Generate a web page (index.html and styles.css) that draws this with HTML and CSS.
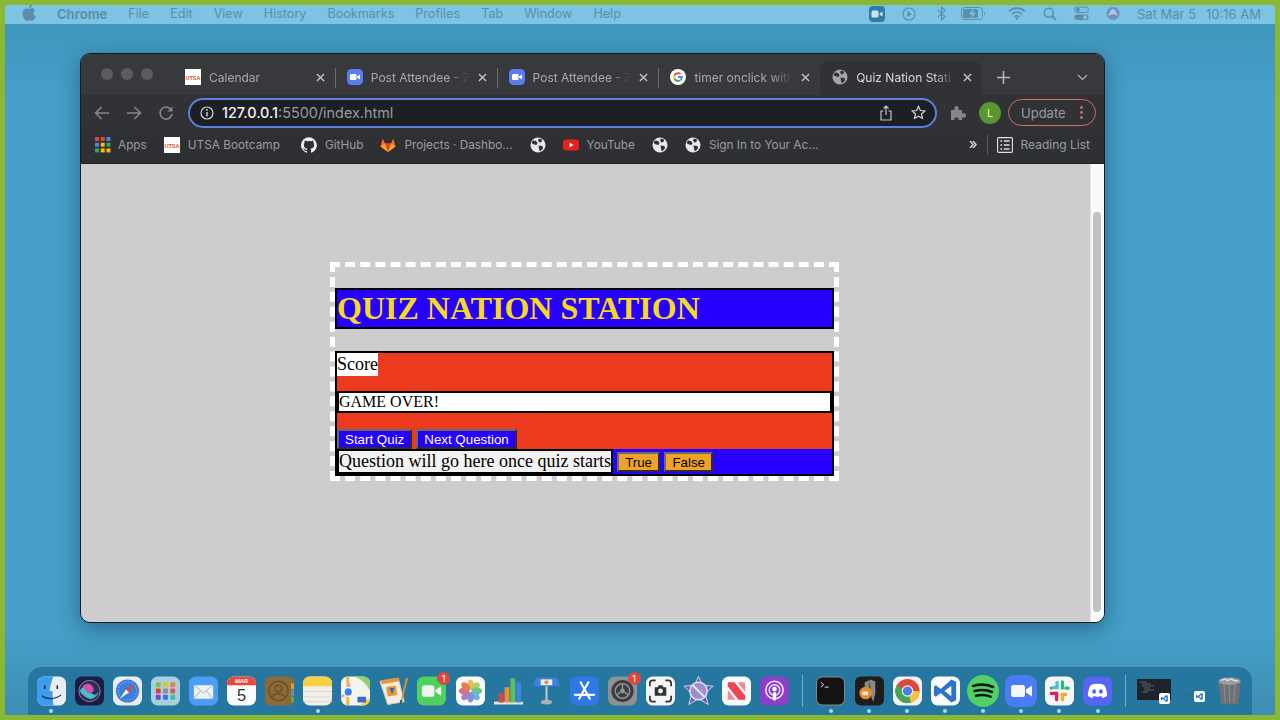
FILE: index.html
```html
<!DOCTYPE html>
<html lang="en">
<head>
    <meta charset="UTF-8">
    <title>Quiz Nation Station</title>
    <link rel="stylesheet" href="styles.css">
</head>
<body>
    <svg class="sprites" width="0" height="0">
        <symbol id="globe" viewBox="0 0 16 16">
            <circle cx="8" cy="8" r="7.500" fill="#e8e8e8"/>
            <path d="M3 3.500l3 .5 1.500 2-1 2-2.500-.5L1.500 6zM9 1.500l3 1-.5 2.500-2 .5-1.500-2zM8.500 8.500l4 .5 .5 2.500-3 3-1-2.500z" fill="#2f3033"/>
        </symbol>
        <symbol id="zoomtab" viewBox="0 0 16 16">
            <rect width="16" height="16" rx="4.500" fill="#5c7cf2"/>
            <rect x="3" y="5" width="6.500" height="6" rx="1.200" fill="#fff"/>
            <path d="M10 7.500l3-2v5l-3-2z" fill="#fff"/>
        </symbol>
        <symbol id="close" viewBox="0 0 10 10">
            <path d="M1 1l8 8M9 1l-8 8" stroke="#c4c5c7" stroke-width="1.500" fill="none"/>
        </symbol>
        <symbol id="vs" viewBox="0 0 30 30">
            <path d="M21 3l5 2.500v19L21 27 10 17l-5 4-2-1.500V10.500L5 9l5 4zM21 9.500L14 15l7 5.500z" fill="#2b74c9"/>
        </symbol>
    </svg>

    <div class="screen">
        <header class="menubar">
            <svg class="apple" width="14" height="16" viewBox="0 0 14 16"><path d="M10 0c.1 1.500-1.300 3.200-3 3.100C6.900 1.600 8.300.2 10 0zM7 4c.8 0 1.700-.7 3-.7 1.200 0 2.500.6 3.200 1.700-2.600 1.600-2.200 5.200.6 6.300-.7 1.900-2.200 4.500-3.800 4.500-.9 0-1.300-.6-2.500-.6s-1.700.6-2.600.6C3 15.800.5 11.800.5 8.500.5 5.300 2.600 3.400 4.400 3.400 5.500 3.400 6.300 4 7 4z" fill="#5d8ea8"/></svg>
            <nav class="menus">
                <span class="app-name">Chrome</span>
                <span>File</span><span>Edit</span><span>View</span><span>History</span><span>Bookmarks</span><span>Profiles</span><span>Tab</span><span>Window</span><span>Help</span>
            </nav>
            <div class="status">
                <svg width="16" height="16" viewBox="0 0 16 16"><rect width="16" height="16" rx="4" fill="#2f7da6"/><rect x="2.500" y="4.500" width="7" height="7" rx="1.500" fill="#cfe6f2"/><path d="M10.500 7.500l3-2v5l-3-2z" fill="#cfe6f2"/></svg>
                <svg class="st-play" width="14" height="14" viewBox="0 0 14 14"><circle cx="7" cy="7" r="6" fill="none" stroke="#5d8ea8" stroke-width="1.100"/><path d="M5.500 4l4 3-4 3z" fill="#5d8ea8"/></svg>
                <svg width="10" height="15" viewBox="0 0 10 15"><path d="M1 4l7 6.500-3.500 3.500V1L8 4.500 1 11" fill="none" stroke="#5d8ea8" stroke-width="1.100"/></svg>
                <svg class="st-battery" width="25" height="13" viewBox="0 0 25 13"><rect x=".500" y=".500" width="21" height="12" rx="3" fill="none" stroke="#5d8ea8"/><rect x="2" y="2" width="15" height="9" rx="1.500" fill="#5d8ea8"/><path d="M23 4.500c1.200.4 1.200 3.600 0 4z" fill="#5d8ea8"/><path d="M13 1l-5 6.500h3.500L10 12l5-6.500h-3.500z" fill="#7cc3e4"/></svg>
                <svg width="18" height="13" viewBox="0 0 18 13"><path d="M1 4.500c4.500-4.500 11.500-4.500 16 0M3.800 7.300c3-3 7.400-3 10.400 0M6.500 10c1.400-1.400 3.600-1.400 5 0" fill="none" stroke="#5d8ea8" stroke-width="1.600"/><circle cx="9" cy="11.500" r="1.300" fill="#5d8ea8"/></svg>
                <svg width="14" height="14" viewBox="0 0 14 14"><circle cx="5.800" cy="5.800" r="4.500" fill="none" stroke="#5d8ea8" stroke-width="1.600"/><path d="M9 9l4 4" stroke="#5d8ea8" stroke-width="2"/></svg>
                <svg width="15" height="15" viewBox="0 0 15 15"><rect x=".500" y="1" width="14" height="5.500" rx="2.700" fill="none" stroke="#5d8ea8"/><circle cx="4" cy="3.700" r="2" fill="#5d8ea8"/><rect x=".500" y="8.500" width="14" height="5.500" rx="2.700" fill="#5d8ea8"/><circle cx="11" cy="11.200" r="2" fill="#7cc3e4"/></svg>
                <svg width="14" height="15" viewBox="0 0 14 15"><circle cx="7" cy="7.500" r="6.500" fill="#6f8fc0"/><path d="M2 10c2-5 3-7 5-7s3 2 5 7c-3-2-7-2-10 0z" fill="#a9c6dc"/></svg>
                <span class="clock">Sat Mar 5</span>
                <span class="clock">10:16 AM</span>
            </div>
        </header>

        <main class="desktop">
            <section class="browser">
                <div class="tabstrip">
                    <div class="lights"><i></i><i></i><i></i></div>
                    <div class="tab">
                        <svg class="fav" viewBox="0 0 16 16"><rect width="16" height="16" fill="#fff"/><text x="8" y="10.500" text-anchor="middle" class="utsa-text">UTSA</text></svg>
                        <span class="tab-title">Calendar</span>
                        <svg class="tab-x"><use href="#close"/></svg>
                    </div>
                    <div class="tab">
                        <svg class="fav"><use href="#zoomtab"/></svg>
                        <span class="tab-title">Post Attendee - Z</span>
                        <svg class="tab-x"><use href="#close"/></svg>
                    </div>
                    <div class="tab">
                        <svg class="fav"><use href="#zoomtab"/></svg>
                        <span class="tab-title">Post Attendee - Z</span>
                        <svg class="tab-x"><use href="#close"/></svg>
                    </div>
                    <div class="tab">
                        <svg class="fav" viewBox="0 0 16 16"><circle cx="8" cy="8" r="8" fill="#fff"/><path d="M8 3.200a4.800 4.800 0 0 1 3.300 1.300L10 5.800A3 3 0 0 0 5.200 7L3.700 5.800A4.800 4.800 0 0 1 8 3.200z" fill="#ea4335"/><path d="M3.700 5.800L5.200 7a3 3 0 0 0 0 2L3.700 10.200a4.800 4.800 0 0 1 0-4.400z" fill="#fbbc05"/><path d="M3.700 10.200L5.200 9A3 3 0 0 0 9.800 10.400l1.400 1.200A4.800 4.800 0 0 1 3.700 10.200z" fill="#34a853"/><path d="M8 7.100h4.700c.3 1.800-.3 3.400-1.500 4.500l-1.400-1.200c.5-.4.900-.9 1-1.500H8z" fill="#4285f4"/></svg>
                        <span class="tab-title">timer onclick with</span>
                        <svg class="tab-x"><use href="#close"/></svg>
                    </div>
                    <div class="tab tab-active">
                        <svg class="fav" viewBox="0 0 16 16"><circle cx="8" cy="8" r="7.500" fill="#a5a6a8"/><path d="M3 3.500l3 .5 1.500 2-1 2-2.500-.5L1.500 6zM9 1.500l3 1-.5 2.500-2 .5-1.500-2zM8.500 8.500l4 .5 .5 2.500-3 3-1-2.500z" fill="#313236"/></svg>
                        <span class="tab-title">Quiz Nation Stati</span>
                        <svg class="tab-x"><use href="#close"/></svg>
                    </div>
                    <svg class="newtab" width="13" height="13" viewBox="0 0 13 13"><path d="M6.500 0v13M0 6.500h13" stroke="#b5b6b8" stroke-width="1.600"/></svg>
                    <svg class="tablist" width="11" height="7" viewBox="0 0 11 7"><path d="M1 1l4.500 4.500L10 1" stroke="#a0a1a4" stroke-width="1.500" fill="none"/></svg>
                </div>

                <div class="toolbar">
                    <svg width="16" height="14" viewBox="0 0 16 14"><path d="M15 7H2M7.500 1L1.500 7l6 6" stroke="#85868a" stroke-width="1.600" fill="none"/></svg>
                    <svg width="16" height="14" viewBox="0 0 16 14"><path d="M1 7h13M8.500 1l6 6-6 6" stroke="#85868a" stroke-width="1.600" fill="none"/></svg>
                    <svg width="16" height="16" viewBox="0 0 16 16"><path d="M13.500 5.500A6 6 0 1 0 14 9" stroke="#85868a" stroke-width="1.600" fill="none"/><path d="M14.500 1.500v5h-5z" fill="#85868a"/></svg>
                    <div class="omnibox">
                        <svg width="14" height="14" viewBox="0 0 14 14"><circle cx="7" cy="7" r="6" fill="none" stroke="#d5d6d8" stroke-width="1.200"/><path d="M7 6v4.500" stroke="#d5d6d8" stroke-width="1.400"/><circle cx="7" cy="4" r=".9" fill="#d5d6d8"/></svg>
                        <span class="url"><b>127.0.0.1</b>:5500/index.html</span>
                        <svg class="share" width="12" height="16" viewBox="0 0 12 16"><path d="M6 10V1M3.500 3.500L6 1l2.500 2.500M3.500 6H1v9h10V6H8.500" stroke="#c6c7c9" stroke-width="1.200" fill="none"/></svg>
                        <svg width="15" height="15" viewBox="0 0 16 16"><path d="M8 1.500l2 4.400 4.800.5-3.600 3.200 1 4.700L8 11.900l-4.200 2.400 1-4.700L1.200 6.400 6 5.900z" stroke="#d5d6d8" stroke-width="1.300" fill="none"/></svg>
                    </div>
                    <svg class="puzzle" width="16" height="16" viewBox="0 0 16 16"><path d="M1 5h3.500C4 2 5 1 6.500 1S9 2 8.500 5H12v3.500c3-.5 4 .5 4 2s-1 2.500-4 2V15H8.500c.5-2-.5-2.500-2-2.500s-2.500.5-2 2.500H1z" fill="#85868a"/></svg>
                    <span class="avatar">L</span>
                    <div class="update"><span>Update</span><svg width="3" height="13" viewBox="0 0 3 13"><circle cx="1.500" cy="1.500" r="1.400" fill="#d8705f"/><circle cx="1.500" cy="6.500" r="1.400" fill="#d8705f"/><circle cx="1.500" cy="11.500" r="1.400" fill="#d8705f"/></svg></div>
                </div>

                <div class="bookmarks">
                    <div class="mark mark-apps">
                        <svg class="fav" width="14" height="14" viewBox="0 0 14 14"><g><rect width="3.500" height="3.500" fill="#ea4335"/><rect x="5" width="3.500" height="3.500" fill="#ea4335"/><rect x="10" width="3.500" height="3.500" fill="#4285f4"/><rect y="5" width="3.500" height="3.500" fill="#4285f4"/><rect x="5" y="5" width="3.500" height="3.500" fill="#fbbc05"/><rect x="10" y="5" width="3.500" height="3.500" fill="#34a853"/><rect y="10" width="3.500" height="3.500" fill="#34a853"/><rect x="5" y="10" width="3.500" height="3.500" fill="#fbbc05"/><rect x="10" y="10" width="3.500" height="3.500" fill="#fbbc05"/></g></svg>
                        <span>Apps</span>
                    </div>
                    <div class="mark">
                        <svg class="fav" viewBox="0 0 16 16"><rect width="16" height="16" fill="#fff"/><text x="8" y="10.500" text-anchor="middle" class="utsa-text">UTSA</text></svg>
                        <span>UTSA Bootcamp</span>
                    </div>
                    <div class="mark mark-github">
                        <svg class="fav" viewBox="0 0 16 16"><path d="M8 .2a8 8 0 0 0-2.500 15.600c.4.100.5-.2.500-.4v-1.400c-2.200.5-2.700-1-2.700-1-.4-.9-.9-1.200-.9-1.200-.7-.5.100-.5.100-.5.800.1 1.200.8 1.200.8.700 1.200 1.900.9 2.300.7.100-.5.300-.9.500-1.100-1.800-.2-3.600-.9-3.600-4 0-.9.300-1.600.8-2.100-.1-.2-.4-1 .1-2.100 0 0 .7-.2 2.200.8a7.600 7.600 0 0 1 4 0c1.500-1 2.200-.8 2.200-.8.400 1.100.2 1.900.1 2.100.5.600.8 1.300.8 2.100 0 3.100-1.900 3.700-3.700 3.900.3.300.6.800.6 1.500v2.200c0 .2.100.5.600.4A8 8 0 0 0 8 .2z" fill="#f0f0f0"/></svg>
                        <span>GitHub</span>
                    </div>
                    <div class="mark">
                        <svg class="fav" viewBox="0 0 16 16"><path d="M8 15L.5 9.500 2.800 1.500 5 6.500h6l2.200-5 2.300 8z" fill="#fc6d26"/><path d="M8 15L5 6.500h6z" fill="#e24329"/><path d="M.5 9.500L5 6.500 8 15zM15.500 9.500L11 6.500 8 15z" fill="#fca326"/></svg>
                        <span>Projects · Dashbo...</span>
                    </div>
                    <div class="mark"><svg class="fav"><use href="#globe"/></svg></div>
                    <div class="mark">
                        <svg class="fav" viewBox="0 0 16 16"><rect y="2.500" width="16" height="11" rx="3" fill="#e62117"/><path d="M6.500 5.500l4 2.500-4 2.500z" fill="#fff"/></svg>
                        <span>YouTube</span>
                    </div>
                    <div class="mark"><svg class="fav"><use href="#globe"/></svg></div>
                    <div class="mark">
                        <svg class="fav"><use href="#globe"/></svg>
                        <span>Sign In to Your Ac...</span>
                    </div>
                    <div class="marks-end">
                        <span class="more">»</span>
                        <i class="divider"></i>
                        <svg class="fav" width="14" height="14" viewBox="0 0 14 14"><rect x=".500" y=".500" width="13" height="13" rx="1" fill="none" stroke="#e0e0e0"/><path d="M3 3.500h1.500M6 3.500h5M3 7h1.500M6 7h5M3 10.500h1.500M6 10.500h5" stroke="#e0e0e0" stroke-width="1.300"/></svg>
                        <span class="reading">Reading List</span>
                    </div>
                </div>

                <div class="viewport">
                    <div class="page">
                        <div class="quiz">
                            <h1 class="quiz-title">QUIZ NATION STATION</h1>
                            <div class="panel">
                                <div class="score-row"><span class="score">Score</span></div>
                                <div class="game-over">GAME OVER!</div>
                                <div class="controls">
                                    <button class="btn-blue">Start Quiz</button>
                                    <button class="btn-blue">Next Question</button>
                                </div>
                                <div class="question-row">
                                    <span class="question">Question will go here once quiz starts</span>
                                    <button class="btn-orange">True</button>
                                    <button class="btn-orange">False</button>
                                </div>
                            </div>
                        </div>
                    </div>
                    <div class="scrollbar"><div class="thumb"></div></div>
                </div>
            </section>
        </main>

        <footer class="dock">
            <div class="dock-item has-dot"><svg viewBox="0 0 30 30"><rect width="30" height="30" rx="7" fill="#e9eef4"/><path d="M7 0h10c-2 5-3.500 10-4 15h3c0 5 .3 10 1 15H7a7 7 0 0 1-7-7V7a7 7 0 0 1 7-7z" fill="#3d9bf0"/><path d="M8 9v4M21 9v4" stroke="#20303f" stroke-width="1.600"/><path d="M5 20c5 4 14 4 20-1" stroke="#20303f" stroke-width="1.300" fill="none"/></svg></div>
            <div class="dock-item"><svg viewBox="0 0 30 30"><rect width="30" height="30" rx="7" fill="#1b1c3f"/><circle cx="15" cy="15" r="11" fill="#2b2f57" stroke="#8d7fb8"/><path d="M5 15c3-6 6-5 10 0s7 5 10 0c-3 7-7 9-10 8S7 19 5 15z" fill="#46c0c8"/><path d="M8 10c4-4 9-3 11 2s-5 7-8 3z" fill="#d64fa8"/></svg></div>
            <div class="dock-item"><svg viewBox="0 0 30 30"><rect width="30" height="30" rx="7" fill="#e9edf2"/><circle cx="15" cy="15" r="12" fill="#3b7fd9"/><circle cx="15" cy="15" r="9.500" fill="none" stroke="#b8d3f2" stroke-dasharray="1 2"/><path d="M23 7l-6.500 9.500-3-3z" fill="#e8453a"/><path d="M7 23l6.500-9.500 3 3z" fill="#f2f2f2"/></svg></div>
            <div class="dock-item"><svg viewBox="0 0 30 30"><rect width="30" height="30" rx="7" fill="#a9cfdd"/><rect x="5" y="6" width="5" height="5" rx="1" fill="#7cc04f"/><rect x="12.500" y="6" width="5" height="5" rx="1" fill="#f0b732"/><rect x="20" y="6" width="5" height="5" rx="1" fill="#e8873a"/><rect x="5" y="12.500" width="5" height="5" rx="1" fill="#d8412f"/><rect x="12.500" y="12.500" width="5" height="5" rx="1" fill="#8b8f95"/><rect x="20" y="12.500" width="5" height="5" rx="1" fill="#e8515f"/><rect x="5" y="19" width="5" height="5" rx="1" fill="#7b45c9"/><rect x="12.500" y="19" width="5" height="5" rx="1" fill="#3f6fe0"/><rect x="20" y="19" width="5" height="5" rx="1" fill="#3fbf9f"/></svg></div>
            <div class="dock-item"><svg viewBox="0 0 30 30"><rect width="30" height="30" rx="7" fill="#4b9cf2"/><rect x="5" y="9" width="20" height="14" rx="1" fill="#eef2f7"/><path d="M5 9l10 8 10-8M5 23l7-8M25 23l-7-8" stroke="#a9b6c6" fill="none"/></svg></div>
            <div class="dock-item"><svg viewBox="0 0 30 30"><rect width="30" height="30" rx="7" fill="#fbfbfb"/><path d="M7 0h16a7 7 0 0 1 7 7v2H0V7a7 7 0 0 1 7-7z" fill="#e8493f"/><text x="15" y="7" class="cal-month">MAR</text><text x="15" y="25" class="cal-day">5</text></svg></div>
            <div class="dock-item"><svg viewBox="0 0 30 30"><rect width="30" height="30" rx="6" fill="#8b6a37"/><rect x="27" y="7" width="3" height="6" fill="#d8a23a"/><rect x="27" y="14" width="3" height="6" fill="#5a8fc9"/><rect x="27" y="21" width="3" height="6" fill="#6aa54c"/><circle cx="14" cy="15" r="10" fill="none" stroke="#6b4f28" stroke-width="1.500"/><circle cx="14" cy="12.500" r="3.500" fill="none" stroke="#6b4f28" stroke-width="1.500"/><path d="M7 21.500c3-5 11-5 14 0" fill="none" stroke="#6b4f28" stroke-width="1.500"/></svg></div>
            <div class="dock-item has-dot"><svg viewBox="0 0 30 30"><rect width="30" height="30" rx="7" fill="#f1efe8"/><path d="M7 0h16a7 7 0 0 1 7 7v3H0V7a7 7 0 0 1 7-7z" fill="#f9cf45"/><path d="M0 15.500h30M0 21h30M0 26h30" stroke="#dcd9d0"/></svg></div>
            <div class="dock-item"><svg viewBox="0 0 30 30"><rect width="30" height="30" rx="7" fill="#f4f4ef"/><path d="M14 0h9a7 7 0 0 1 7 7v8C27 8 21 3 14 0z" fill="#8fd16c"/><path d="M19 30l11-8v1a7 7 0 0 1-7 7z" fill="#f5d342"/><path d="M7 0v30" stroke="#f0b732" stroke-width="3"/><path d="M0 21c6-2 9-7 8-14" stroke="#e8a0b8" stroke-width="3" fill="none"/><circle cx="7.500" cy="16" r="4.500" fill="#3a7fe8" stroke="#fff" stroke-width="1.500"/><rect x="17" y="21" width="9" height="6" rx="1" fill="#3c6cc9"/></svg></div>
            <div class="dock-item"><svg viewBox="0 0 30 30"><path d="M1 5l19-3 6 24-17 3z" fill="#f2ede0" stroke="#d8cfba"/><path d="M2 4l18-3 1 4-18 3z" fill="#e8953a"/><rect x="8" y="10" width="10" height="10" fill="#e8953a" transform="rotate(-9 13 14)"/><path d="M11 12l5 0-2.500 6z" fill="#3465c9"/><path d="M28 1l2 1-6 23-2 3z" fill="#d8953a"/><path d="M22 24l2 1-2 4z" fill="#2a2a2a"/></svg></div>
            <div class="dock-item"><svg viewBox="0 0 30 30"><rect width="30" height="30" rx="7" fill="#4fd15f"/><rect x="5" y="9" width="13" height="12" rx="3" fill="#eef5ee"/><path d="M19 14l6-4v10l-6-4z" fill="#eef5ee"/></svg><span class="badge">1</span></div>
            <div class="dock-item"><svg viewBox="0 0 30 30"><rect width="30" height="30" rx="7" fill="#fbfbfb"/><g opacity=".85"><ellipse cx="15" cy="8.500" rx="3.500" ry="5.500" fill="#f2b233"/><ellipse cx="20" cy="10.500" rx="3.500" ry="5.500" fill="#9ccb4c" transform="rotate(45 20 10.500)"/><ellipse cx="21.500" cy="15" rx="5.500" ry="3.500" fill="#5dbb73"/><ellipse cx="20" cy="20" rx="3.500" ry="5.500" fill="#53a9d6" transform="rotate(-45 20 20)"/><ellipse cx="15" cy="21.500" rx="3.500" ry="5.500" fill="#6a83d8"/><ellipse cx="10" cy="20" rx="3.500" ry="5.500" fill="#9a6bc2" transform="rotate(45 10 20)"/><ellipse cx="8.500" cy="15" rx="5.500" ry="3.500" fill="#c9597f"/><ellipse cx="10" cy="10.500" rx="3.500" ry="5.500" fill="#e8643c" transform="rotate(-45 10 10.500)"/></g></svg></div>
            <div class="dock-item"><svg viewBox="0 0 30 30"><path d="M0 26h30v3H0z" fill="#e6e8ea"/><rect x="5" y="17" width="5" height="10" fill="#d8454a"/><rect x="11" y="11" width="5" height="16" fill="#ee8f33"/><rect x="17" y="2" width="5" height="25" fill="#5cc25c"/><rect x="23" y="6" width="5" height="21" fill="#3f85e0"/></svg></div>
            <div class="dock-item"><svg viewBox="0 0 30 30"><path d="M4 1h22l3 9H1z" fill="#3f7fdc"/><rect x="9" y="3" width="12" height="6" fill="#eaf0f7"/><circle cx="15" cy="6" r="2.200" fill="#e8953a"/><rect x="14" y="10" width="2" height="15" fill="#c9ccd0"/><ellipse cx="15" cy="26.500" rx="6" ry="2.500" fill="#aeb2b8"/></svg></div>
            <div class="dock-item"><svg viewBox="0 0 30 30"><rect width="30" height="30" rx="7" fill="#2f78e8"/><path d="M11 6l9.500 17M19 6L9.500 23M5 19h20" stroke="#fff" stroke-width="2.200" stroke-linecap="round"/></svg></div>
            <div class="dock-item"><svg viewBox="0 0 30 30"><rect width="30" height="30" rx="7" fill="#8f9194"/><circle cx="15" cy="15" r="11.500" fill="#3b3c3f"/><circle cx="15" cy="15" r="7.500" fill="none" stroke="#8f9194" stroke-width="1.500"/><circle cx="15" cy="15" r="2.500" fill="#8f9194"/><path d="M15 8v5M9 19l4-3M21 19l-4-3" stroke="#8f9194" stroke-width="1.500"/></svg><span class="badge">1</span></div>
            <div class="dock-item"><svg viewBox="0 0 30 30"><rect width="30" height="30" rx="7" fill="#f5f5f5"/><path d="M4 10V7a3 3 0 0 1 3-3h3M20 4h3a3 3 0 0 1 3 3v3M26 20v3a3 3 0 0 1-3 3h-3M10 26H7a3 3 0 0 1-3-3v-3" stroke="#333" stroke-width="1.800" fill="none"/><path d="M9 11h3l1-2h4l1 2h3v9H9z" fill="#333"/><circle cx="15" cy="15" r="2.500" fill="#f5f5f5"/></svg></div>
            <div class="dock-item"><svg viewBox="0 0 30 30"><path d="M15 0l4 9 11 1-8 8 3 11-10-6-10 6 3-11-8-8 11-1z" fill="#6c5cb8" stroke="#d8d8e4"/><circle cx="15" cy="15" r="9" fill="#a08fd0" stroke="#e2e2ea" stroke-width="1.500"/><path d="M9 9l12 12" stroke="#e2e2ea" stroke-width="2"/></svg></div>
            <div class="dock-item"><svg viewBox="0 0 30 30"><rect width="30" height="30" rx="7" fill="#fbfbfb"/><path d="M6 6h7l11 14v4h-7L6 10z" fill="#ee4455"/><path d="M16 6h8v10zM6 14l8 10H6z" fill="#f28a92"/></svg></div>
            <div class="dock-item"><svg viewBox="0 0 30 30"><rect width="30" height="30" rx="7" fill="#8b3fc6"/><circle cx="15" cy="14" r="9" fill="none" stroke="#f0e4f8" stroke-width="1.600"/><circle cx="15" cy="14" r="5.500" fill="none" stroke="#f0e4f8" stroke-width="1.400"/><circle cx="15" cy="13" r="2.400" fill="#fff"/><rect x="13.300" y="16" width="3.400" height="9" rx="1.700" fill="#fff"/></svg></div>
            <div class="dock-sep"></div>
            <div class="dock-item has-dot"><svg viewBox="0 0 30 30"><rect x=".500" y=".500" width="29" height="29" rx="6" fill="#131313" stroke="#8c8c8c"/><path d="M5 6l3 2.500L5 11M9 11h4" stroke="#e8e8e8" fill="none"/></svg></div>
            <div class="dock-item has-dot"><svg viewBox="0 0 30 30"><rect width="30" height="30" rx="6" fill="#1e1d1c"/><path d="M15 3l6 2v12l-2 9-2-4zM10 6l5-2v12l-2 8-3-5z" fill="#8a8a88"/><circle cx="11" cy="17" r="6.500" fill="#e88a2c"/><rect x="7.500" y="15.500" width="6" height="4" rx="1" fill="#f5f1e8"/></svg></div>
            <div class="dock-item has-dot"><svg viewBox="0 0 30 30"><rect width="30" height="30" rx="7" fill="#f2f2f2"/><circle cx="15" cy="15" r="12.500" fill="#e3453a"/><path d="M15 15l12.500 0a12.500 12.500 0 0 1-9 12z" fill="#f6c536"/><path d="M15 15l3.500 12A12.500 12.500 0 0 1 4 9z" fill="#44a65a"/><circle cx="15" cy="15" r="6" fill="#f2f2f2"/><circle cx="15" cy="15" r="4.700" fill="#4a7fe4"/></svg></div>
            <div class="dock-item has-dot"><svg viewBox="0 0 30 30"><rect width="30" height="30" rx="7" fill="#fbfbfb"/><use href="#vs"/></svg></div>
            <div class="dock-item has-dot"><svg class="big-icon" viewBox="0 0 32 32"><circle cx="16" cy="16" r="16" fill="#50d164"/><path d="M6 11c7-2 14-2 20 1M7.500 16c6-1.500 12-1.500 17.500 1M9 20.800c5-1.200 10-1 14.500.8" stroke="#141414" stroke-width="2.600" stroke-linecap="round" fill="none"/></svg></div>
            <div class="dock-item has-dot"><svg class="big-icon" viewBox="0 0 32 32"><rect width="32" height="32" rx="9" fill="#4b7cf5"/><rect x="6" y="10" width="14" height="12" rx="2.500" fill="#f5f7fb"/><path d="M21 14.500l6-4v11l-6-4z" fill="#f5f7fb"/></svg></div>
            <div class="dock-item has-dot"><svg viewBox="0 0 30 30"><rect width="30" height="30" rx="7" fill="#f5f5f5"/><g stroke-width="3.400" stroke-linecap="round"><path d="M12.500 6v5.500H9" stroke="#52b8de" fill="none"/><path d="M6.500 12h.1M18 5.500v6.500" stroke="#2eb67d" fill="none"/><path d="M24 12h-2.500" stroke="#2eb67d"/><path d="M18 24v-5.500h3.500" stroke="#ecb22e" fill="none"/><path d="M6.500 17.500H12v6.500" stroke="#e01e5a" fill="none"/></g></svg></div>
            <div class="dock-item has-dot"><svg viewBox="0 0 30 30"><rect width="30" height="30" rx="7" fill="#5865f2"/><path d="M8 9c4-2 10-2 14 0 2 3 3 7 3 11-2 1.500-3.500 2-5 2.300l-1-2c-3 .8-5 .8-8 0l-1 2c-1.500-.3-3-.8-5-2.300 0-4 1-8 3-11z" fill="#fff"/><ellipse cx="11.500" cy="15.500" rx="2" ry="2.300" fill="#5865f2"/><ellipse cx="18.500" cy="15.500" rx="2" ry="2.300" fill="#5865f2"/></svg></div>
            <div class="dock-sep"></div>
            <div class="dock-item"><svg class="thumb-icon" viewBox="0 0 34 30"><rect y="3" width="34" height="21" fill="#20242a"/><path d="M3 6h7M5 8h9M5 10h12M7 12h6M7 14h10M5 16h6" stroke="#55606c"/><rect x="22" y="17" width="11" height="11" rx="2" fill="#fff"/><svg x="23" y="18" width="9" height="9" viewBox="0 0 30 30"><use href="#vs"/></svg></svg></div>
            <div class="dock-item"><svg class="thumb-icon" viewBox="0 0 34 30"><path d="M10 18h2M14 18h2" stroke="#4a5a66"/><rect x="19" y="15" width="11" height="11" rx="2" fill="#fff"/><svg x="20" y="16" width="9" height="9" viewBox="0 0 30 30"><use href="#vs"/></svg></svg></div>
            <div class="dock-item"><svg viewBox="0 0 30 32"><path d="M3 6h24l-3 24H6z" fill="#6e7173"/><path d="M9 8l1.500 20M15 8v20M21 8l-1.500 20" stroke="#8f9294"/><ellipse cx="15" cy="5.500" rx="12" ry="4" fill="#9a9c9e"/><path d="M6 5l4-2 3 2 4-2 3 2 4 0" stroke="#d8dadc" stroke-width="1.500" fill="none"/></svg></div>
        </footer>
    </div>
</body>
</html>
```

FILE: styles.css
```css
* {
    box-sizing: border-box;
}
html, body {
    margin: 0;
    height: 720px;
    overflow: hidden;
}
body {
    background-color: #8ab833;
    padding: 5px;
    font-family: Inter, "Liberation Sans", sans-serif;
}
.sprites {
    position: absolute;
}
.utsa-text {
    font: bold 5.5px "Liberation Sans", sans-serif;
    fill: #d8541e;
}
.screen {
    height: 710px;
    display: flex;
    flex-direction: column;
    background: linear-gradient(#3f95bc, #459fc7 90px, #459fc7 630px, #3d8db4);
}

/* menu bar */
.menubar {
    height: 19px;
    background-color: #7cc3e4;
    color: #5d8ea8;
    font-size: 12.600px;
    display: flex;
    align-items: center;
    padding: 0 14px 2px 17px;
}
.apple {
    margin-top: -2px;
}
.menus {
    display: flex;
    gap: 21px;
    margin-left: 21px;
}
.app-name {
    font-size: 13px;
    font-weight: 700;
}
.status {
    margin-left: auto;
    display: flex;
    align-items: center;
    gap: 17px;
}
.st-play {
    margin-right: 4px;
}
.st-battery {
    margin: 0 5px 0 -3px;
}
.clock {
    font-size: 13px;
}
.clock + .clock {
    margin-left: -7px;
}

/* browser window */
.desktop {
    flex: 1;
    padding: 29px 0 0 75px;
}
.browser {
    width: 1025px;
    height: 570px;
    border-radius: 10px;
    overflow: hidden;
    border: 1px solid #15191c;
    box-shadow: 0 6px 22px rgba(0, 40, 70, 0.45);
    display: flex;
    flex-direction: column;
}
.tabstrip {
    height: 41px;
    background-color: #37393d;
    display: flex;
    align-items: flex-end;
    position: relative;
    color: #a8a9ac;
    font-size: 12px;
    padding-left: 92px;
}
.lights {
    position: absolute;
    left: 20px;
    top: 14px;
    display: flex;
    gap: 8px;
}
.lights i {
    width: 12px;
    height: 12px;
    border-radius: 50%;
    background-color: #5b5c5f;
}
.tab {
    width: 161.800px;
    height: 34px;
    padding: 0 10px 2px 12px;
    display: flex;
    align-items: center;
    position: relative;
}
.tab + .tab::before {
    content: "";
    position: absolute;
    left: 0;
    top: 7px;
    height: 20px;
    border-left: 1px solid #6a6b6e;
}
.tab-active {
    background-color: #313236;
    border-radius: 9px 9px 0 0;
    color: #d9dadc;
}
.tab-active::before {
    display: none;
}
.fav {
    width: 16px;
    height: 16px;
    flex: none;
}
.tab-title {
    flex: 1;
    min-width: 0;
    margin: 0 8px;
    white-space: nowrap;
    -webkit-mask-image: linear-gradient(to left, transparent 0, #000 22px);
    mask-image: linear-gradient(to left, transparent 0, #000 22px);
}
.tab:first-of-type .tab-title {
    -webkit-mask-image: none;
    mask-image: none;
}
.tab-x {
    width: 9px;
    height: 9px;
    flex: none;
}
.newtab {
    margin: 0 0 11px 15px;
}
.tablist {
    margin: 0 0 14px 67px;
}

/* toolbar */
.toolbar {
    height: 35px;
    background-color: #313236;
    display: flex;
    align-items: center;
    padding-left: 13px;
    gap: 16px;
}
.omnibox {
    width: 749px;
    height: 30px;
    margin-left: -2px;
    border: 2px solid #5f7fdc;
    border-radius: 15px;
    background-color: #1e1f22;
    display: flex;
    align-items: center;
    padding: 0 9px 0 10px;
    gap: 8px;
}
.url {
    flex: 1;
    color: #9a9b9e;
    font-size: 14.400px;
}
.url b {
    color: #f2f2f3;
    font-weight: 500;
}
.share {
    margin-right: 11px;
}
.puzzle {
    margin-left: -3px;
}
.avatar {
    width: 22px;
    height: 22px;
    margin-left: -3px;
    border-radius: 50%;
    background-color: #5a9632;
    color: #e4efd8;
    font-size: 11px;
    display: flex;
    align-items: center;
    justify-content: center;
}
.update {
    width: 88px;
    height: 27px;
    margin-left: -9px;
    border: 1px solid #d8705f;
    border-radius: 14px;
    color: #9a9b9e;
    font-size: 13px;
    display: flex;
    align-items: center;
    justify-content: space-between;
    padding: 0 12px;
}

/* bookmarks bar */
.bookmarks {
    height: 34px;
    background-color: #2f3033;
    border-bottom: 1px solid #1f2022;
    color: #9c9da1;
    font-size: 11.800px;
    display: flex;
    align-items: center;
    padding: 0 0 4px 14px;
    gap: 17px;
}
.mark {
    display: flex;
    align-items: center;
    gap: 8px;
}
.mark-apps {
    gap: 7px;
}
.mark-github {
    margin-left: 4px;
}
.marks-end {
    margin-left: auto;
    display: flex;
    align-items: center;
    gap: 9px;
    padding-right: 14px;
}
.more {
    color: #e4e4e4;
    font-size: 15px;
    line-height: 1;
    margin-top: -3px;
}
.divider {
    height: 20px;
    border-left: 1px solid #5c5d60;
}
.reading {
    font-size: 12px;
    margin-left: -1px;
}

/* the page inside the browser */
.viewport {
    flex: 1;
    display: flex;
    background-color: #cdcdcd;
    min-height: 0;
}
.page {
    flex: 1;
    padding: 98px 0 0 249px;
    font-family: "Liberation Serif", serif;
    font-size: 16px;
    color: #000;
}
.quiz {
    width: 509px;
    border: 5px dashed #fff;
}
.quiz-title {
    margin: 21px 0 22px;
    font-size: 32px;
    color: #f7d922;
    background-color: #2600ff;
    border: 2px solid #000;
    line-height: 37px;
}
.panel {
    background-color: #ec3a1e;
    border: 2px solid #000;
}
.score-row {
    height: 38px;
}
.score {
    display: inline-block;
    background-color: #fff;
    font-size: 18px;
    line-height: 23px;
}
.game-over {
    background-color: #fff;
    border: 2px solid #000;
    height: 22px;
    font-size: 16px;
    line-height: 18px;
}
.controls {
    padding-top: 16px;
    height: 36px;
    display: flex;
    align-items: flex-end;
    gap: 4px;
}
.question-row {
    background-color: #2600ff;
    height: 25px;
    display: flex;
    align-items: flex-end;
    gap: 4px;
}
.question {
    background-color: #f2f2f2;
    border: 2px solid #000;
    height: 25px;
    font-size: 18px;
    line-height: 21px;
    white-space: nowrap;
}
button {
    font-family: "Liberation Sans", sans-serif;
    font-size: 13.330px;
    height: 20px;
    border: 2px solid;
    border-color: #6a6a6a #2e2e2e #2e2e2e #6a6a6a;
    border-radius: 0;
}
.btn-blue {
    background-color: #2600ff;
    color: #fff;
    padding: 0 6px;
}
.btn-orange {
    background-color: #efa22a;
    color: #000;
    padding: 0 6.200px;
    margin-bottom: 2px;
}
.scrollbar {
    width: 14px;
    background-color: #fafafa;
    border-left: 1px solid #e6e6e6;
    padding: 48px 3px 10px 2px;
}
.thumb {
    height: 100%;
    background-color: #c1c1c1;
    border-radius: 5px;
}

/* dock */
.dock {
    height: 48px;
    margin: 0 23px;
    background-color: #25779f;
    border: 1px solid #2f6f93;
    border-bottom: 0;
    border-radius: 14px 14px 0 0;
    display: flex;
    align-items: center;
    padding: 0 0 2px 3px;
}
.dock-item {
    width: 38.100px;
    height: 30px;
    flex: none;
    display: flex;
    justify-content: center;
    position: relative;
}
.dock-item > svg {
    width: 29px;
    height: 30px;
    overflow: visible;
}
.dock-item > .big-icon {
    width: 32px;
    height: 32px;
    margin-top: -1px;
}
.dock-item > .thumb-icon {
    width: 34px;
}
.has-dot::after {
    content: "";
    position: absolute;
    left: 17px;
    bottom: -7px;
    width: 4px;
    height: 4px;
    border-radius: 50%;
    background-color: #9fdcf5;
}
.dock-sep {
    width: 18px;
    height: 32px;
    flex: none;
    background: linear-gradient(#6fa9c5, #6fa9c5) center / 1px 100% no-repeat;
}
.badge {
    position: absolute;
    top: -4px;
    right: 1px;
    width: 13px;
    height: 13px;
    border-radius: 50%;
    background-color: #e0483c;
    color: #fff;
    font-size: 9px;
    line-height: 13px;
    text-align: center;
}
.cal-month {
    font: bold 6px "Liberation Sans", sans-serif;
    fill: #fff;
    text-anchor: middle;
}
.cal-day {
    font: 17px "Liberation Sans", sans-serif;
    fill: #333;
    text-anchor: middle;
}
```
